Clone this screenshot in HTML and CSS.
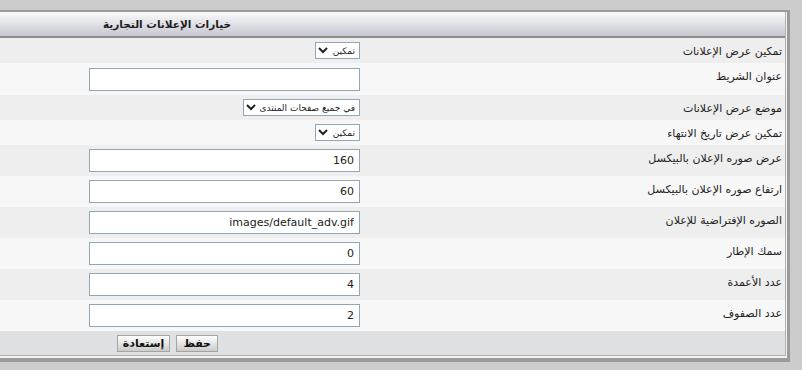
FILE: index.html
```html
<!doctype html>
<html dir="rtl" lang="ar">
<head>
<meta charset="utf-8">
<title>خيارات الإعلانات التجارية</title>
<link rel="stylesheet" href="styles.css">
</head>
<body>
<div class="panel">
	<div class="inner">
		<div class="head">خيارات الإعلانات التجارية</div>

		<div class="row odd sel-row">
			<div class="lbl">تمكين عرض الإعلانات</div>
			<div class="fld"><select class="sel-short"><option>تمكين</option><option>تعطيل</option></select></div>
		</div>
		<div class="row even tall">
			<div class="lbl">عنوان الشريط</div>
			<div class="fld"><input type="text" value=""></div>
		</div>
		<div class="row odd sel-row">
			<div class="lbl">موضع عرض الإعلانات</div>
			<div class="fld"><select class="sel-long"><option>في جميع صفحات المنتدى</option><option>في الصفحة الرئيسية فقط</option></select></div>
		</div>
		<div class="row even sel-row">
			<div class="lbl">تمكين عرض تاريخ الانتهاء</div>
			<div class="fld"><select class="sel-short"><option>تمكين</option><option>تعطيل</option></select></div>
		</div>
		<div class="row odd">
			<div class="lbl">عرض صوره الإعلان بالبيكسل</div>
			<div class="fld"><input type="text" value="160"></div>
		</div>
		<div class="row even">
			<div class="lbl">ارتفاع صوره الإعلان بالبيكسل</div>
			<div class="fld"><input type="text" value="60"></div>
		</div>
		<div class="row odd">
			<div class="lbl">الصوره الإفتراضية للإعلان</div>
			<div class="fld"><input type="text" value="images/default_adv.gif"></div>
		</div>
		<div class="row even">
			<div class="lbl">سمك الإطار</div>
			<div class="fld"><input type="text" value="0"></div>
		</div>
		<div class="row odd">
			<div class="lbl">عدد الأعمدة</div>
			<div class="fld"><input type="text" value="4"></div>
		</div>
		<div class="row even">
			<div class="lbl">عدد الصفوف</div>
			<div class="fld"><input type="text" value="2"></div>
		</div>

		<div class="foot">
			<button type="submit" class="btn">حفظ</button>
			<button type="reset" class="btn">إستعادة</button>
		</div>
	</div>
</div>
</body>
</html>
```

FILE: styles.css
```css
html{ overflow:hidden; background:#cccccc;}
body{ margin:10px 12px 0 0; font-family:"DejaVu Sans", Tahoma, sans-serif; font-size:11px; color:#222;}
.panel{ width:900px; border:3px solid #9b9b9b; border-top-width:2px; border-bottom-width:4px; padding:0 1px 2px 0; background:#f2f2f2;}
.inner{ border-right:1px solid #b2b2b2; border-bottom:1px solid #b2b2b2;}
.head{ height:24px; line-height:24px; padding-right:554px; font-size:10.5px; font-weight:bold; color:#1e1e1e; background:linear-gradient(#fbfbfc, #c6c7d0); border-bottom:2px solid #8d8d8d;}

.row{ display:grid; grid-template-columns:418px 1fr; height:31px;}
.row.tall{ height:32px;}
.row.sel-row{ height:25px;}
.odd{ background:#eeeeee;}
.even{ background:#f7f7f7;}
.lbl{ padding:7px 3px 0 0; white-space:nowrap;}
.fld{ display:flex; align-items:center; padding-right:7px;}

input{ box-sizing:border-box; width:271px; height:23px; border:1px solid #8ea8ba; padding:0 5px; font-family:"DejaVu Sans", sans-serif; font-size:11px; color:#222; background:#fff; direction:rtl;}
select{ box-sizing:border-box; height:17px; border:1px solid #8ea8ba; background:#fff; font-family:"DejaVu Sans", sans-serif; font-size:9px; color:#222; padding:0;}
.sel-short{ width:45px;}
.sel-long{ width:117px;}

.foot{ display:flex; gap:6px; height:24px; padding:4px 567px 0 0; box-sizing:border-box; background:#dfe0e2;}
.btn{ height:17px; padding:0 6px; border:1px solid #a4a4a4; background:linear-gradient(#ffffff, #cbcbcb); font-family:"DejaVu Sans", sans-serif; font-size:11px; font-weight:bold; color:#111; line-height:14px;}
.btn + .btn{ padding:0 5px;}
```
